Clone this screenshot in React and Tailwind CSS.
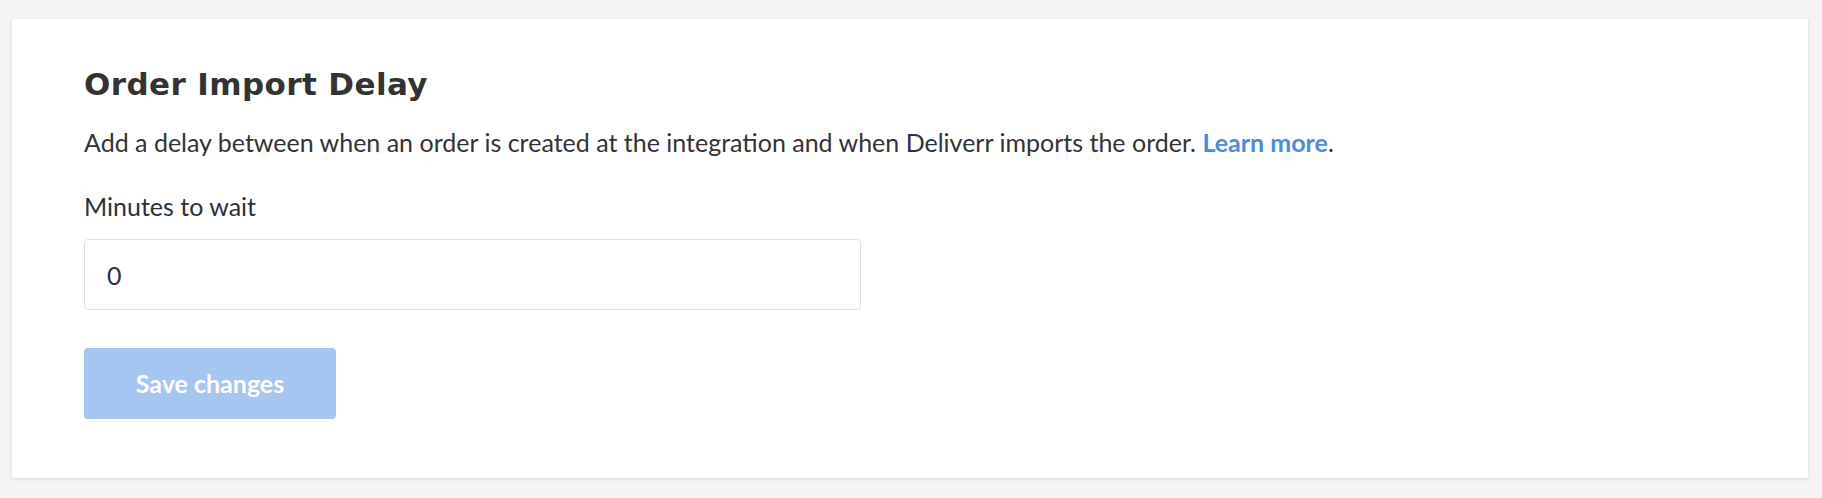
import React, { useState } from 'react';

const App = () => {
  const [minutes, setMinutes] = useState('0');

  return (
    <div className="min-h-[498px] bg-[#f3f4f6] pt-[19px] pl-3 pr-[14px] font-['Lato',sans-serif]">
      <div className="bg-white px-[72px] pt-[45px] pb-[59px] shadow-[0_1px_3px_rgba(0,0,0,0.12)]">
        <h2 className="font-['DejaVu_Sans',sans-serif] text-[31px] leading-[40px] font-bold tracking-[0.4px] text-[#333333]">
          Order Import Delay
        </h2>

        <p className="mt-5 text-[25px] leading-[36px] text-[#333333]">
          Add a delay between when an order is created at the integration and when Deliverr imports the order.{' '}
          <a href="#" className="font-bold text-[#4a8ae8]">
            Learn more
          </a>
          .
        </p>

        <label htmlFor="minutes" className="mt-7 block text-[25px] leading-[36px] text-[#2b323b]">
          Minutes to wait
        </label>
        <input
          id="minutes"
          type="text"
          value={minutes}
          onChange={({ target }) => setMinutes(target.value)}
          className="mt-[15px] block h-[71px] w-[777px] rounded-[4px] border border-[#dde1e7] px-[22px] text-[25px] text-[#2b323b] focus:outline-none"
        />

        <button
          type="button"
          disabled
          className="mt-[38px] block h-[71px] w-[252px] rounded-[4px] bg-[#a6c6f2] text-[25px] font-bold text-white"
        >
          Save changes
        </button>
      </div>
    </div>
  );
};

export default App;
